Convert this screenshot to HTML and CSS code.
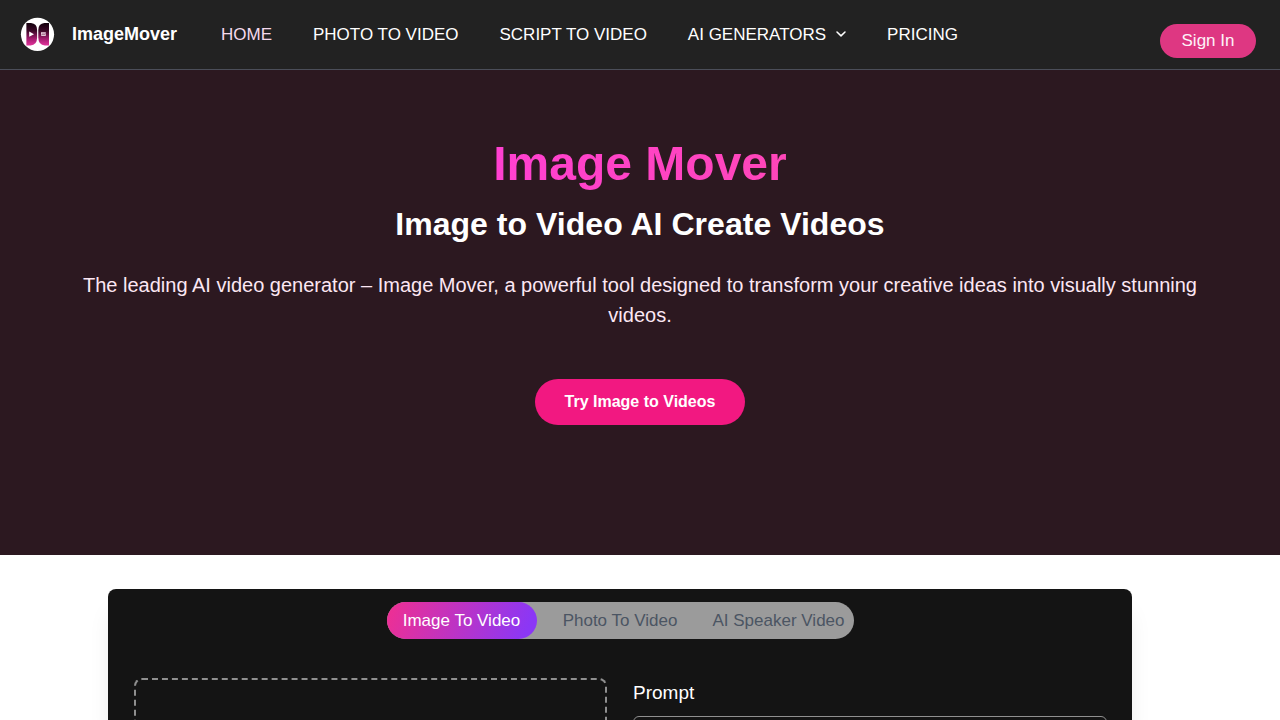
FILE: index.html
```html
<!DOCTYPE html>
<html lang="en">
<head>
<meta charset="utf-8">
<title>Image Mover</title>
<link rel="stylesheet" href="styles.css">
</head>
<body>
<header class="header">
  <a class="brand">
    <svg class="logo" width="35" height="35" viewBox="0 0 35 35">
      <defs>
        <linearGradient id="wing" x1="0" y1="0" x2="0" y2="1">
          <stop offset="0" stop-color="#12000b"/>
          <stop offset=".35" stop-color="#3c0828"/>
          <stop offset=".7" stop-color="#a41b70"/>
          <stop offset="1" stop-color="#e3349c"/>
        </linearGradient>
      </defs>
      <circle cx="17.5" cy="17.3" r="16.6" fill="#fff"/>
      <path d="M6.4 6H11Q17.1 6.6 17.1 13V20.5Q17.1 28 10.5 28.6H6.4Z" fill="url(#wing)"/>
      <path d="M29 6H24.4Q18.3 6.6 18.3 13V20.5Q18.3 28 24.9 28.6H29Z" fill="url(#wing)"/>
      <path d="M9.2 14.6L14 17.2L9.2 19.8Z" fill="#fff"/>
      <rect x="21" y="15.2" width="4.8" height="3.8" fill="#e5c9da"/>
      <path d="M21.4 18L23 16.8L24 17.5L25.4 16.6" fill="none" stroke="#702050" stroke-width=".7"/>
    </svg>
    <span class="brand-name">ImageMover</span>
  </a>
  <nav class="nav">
    <a class="current">HOME</a>
    <a>PHOTO TO VIDEO</a>
    <a>SCRIPT TO VIDEO</a>
    <a class="dropdown">AI GENERATORS
      <svg width="12" height="12" viewBox="0 0 12 12"><path d="M2 4L6 7.9L10 4" fill="none" stroke="#fff" stroke-width="1.5" stroke-linecap="round" stroke-linejoin="round"/></svg>
    </a>
    <a>PRICING</a>
  </nav>
  <button class="sign-in">Sign In</button>
</header>
<section class="hero">
  <h1 class="hero-title">Image Mover</h1>
  <h2 class="hero-subtitle">Image to Video AI Create Videos</h2>
  <p class="hero-text">The leading AI video generator – Image Mover, a powerful tool designed to transform your creative ideas into visually stunning videos.</p>
  <a class="cta">Try Image to Videos</a>
</section>
<main class="card">
  <div class="tabs">
    <a class="tab active">Image To Video</a>
    <a class="tab">Photo To Video</a>
    <a class="tab">AI Speaker Video</a>
  </div>
  <div class="workspace">
    <div class="dropzone"></div>
    <div class="prompt">
      <label class="prompt-label" for="prompt">Prompt</label>
      <textarea class="prompt-input" id="prompt"></textarea>
    </div>
  </div>
</main>
</body>
</html>
```
FILE: styles.css
```css
* { box-sizing: border-box; }
body {
  margin: 0;
  background: #fff;
  color: #fff;
  font-family: "Liberation Sans", Arial, sans-serif;
}
h1, h2, p { margin: 0; }

.header {
  display: flex;
  align-items: center;
  height: 70px;
  padding: 0 24px 0 20px;
  background: #222;
  border-bottom: 1px solid #4b4e59;
}
.brand { display: flex; align-items: center; gap: 17px; width: 201px; }
.logo { display: block; }
.brand-name { padding-bottom: 2px; font-size: 18px; font-weight: 700; line-height: 28px; }
.nav { display: flex; gap: 41px; font-size: 17px; line-height: 24px; white-space: nowrap; }
.nav .current { color: #f5d9ec; }
.dropdown { display: flex; align-items: center; gap: 9px; }
.dropdown svg { margin: 0 -1px 2px 0; }
.sign-in {
  width: 96px;
  height: 34px;
  margin: 13px 0 0 auto;
  padding: 0;
  border: 0;
  border-radius: 17px;
  background: #de3782;
  color: #fdf2f8;
  font: 17px/34px "Liberation Sans", Arial, sans-serif;
}

.hero {
  display: flex;
  flex-direction: column;
  align-items: center;
  height: 485px;
  padding: 64px 74px 0;
  background: #2c1820;
  text-align: center;
}
.hero-title {
  width: 100%;
  font-size: 48px;
  line-height: 60px;
  background: linear-gradient(90deg, #ff38f4, #ff4e96);
  -webkit-background-clip: text;
  background-clip: text;
  color: transparent;
}
.hero-subtitle { margin-top: 10px; font-size: 32px; line-height: 40px; letter-spacing: .03px; }
.hero-text { margin-top: 26px; font-size: 20px; line-height: 30px; color: #fce7f3; }
.cta {
  margin-top: 49px;
  width: 210px;
  height: 46px;
  border-radius: 23px;
  background: #f21881;
  font-size: 16px;
  font-weight: 700;
  line-height: 46px;
}

.card {
  width: 1024px;
  height: 131px;
  margin: 34px 0 0 108px;
  padding: 13px 25px 0 26px;
  border-radius: 8px 8px 0 0;
  background: #141414;
  box-shadow: 0 20px 25px -5px rgba(0, 0, 0, .1);
  overflow: hidden;
}
.tabs {
  display: flex;
  width: 467px;
  height: 37px;
  margin-left: 253px;
  border-radius: 19px;
  background: #9b9b9b;
  color: #4b5563;
  font-size: 17px;
  line-height: 37px;
  text-align: center;
  white-space: nowrap;
}
.tab { flex: 0 0 150px; border-radius: 19px; }
.tab + .tab { flex-basis: 166px; }
.tab:last-child { flex-basis: 151px; }
.tab.active {
  padding-right: 1px;
  background: linear-gradient(110deg, #f02f91, #8b37f5 92%);
  color: #fff;
}
.workspace { display: grid; grid-template-columns: 473px 474px; gap: 26px; margin-top: 39px; }
.dropzone { height: 420px; border: 2px dashed #8f8f8f; border-radius: 8px; }
.prompt { display: flex; flex-direction: column; }
.prompt-label { padding-top: 1px; font-size: 19px; line-height: 28px; }
.prompt-input {
  height: 160px;
  margin-top: 9px;
  border: 1px solid #909090;
  border-radius: 6px;
  background: #141414;
  resize: none;
}
```
